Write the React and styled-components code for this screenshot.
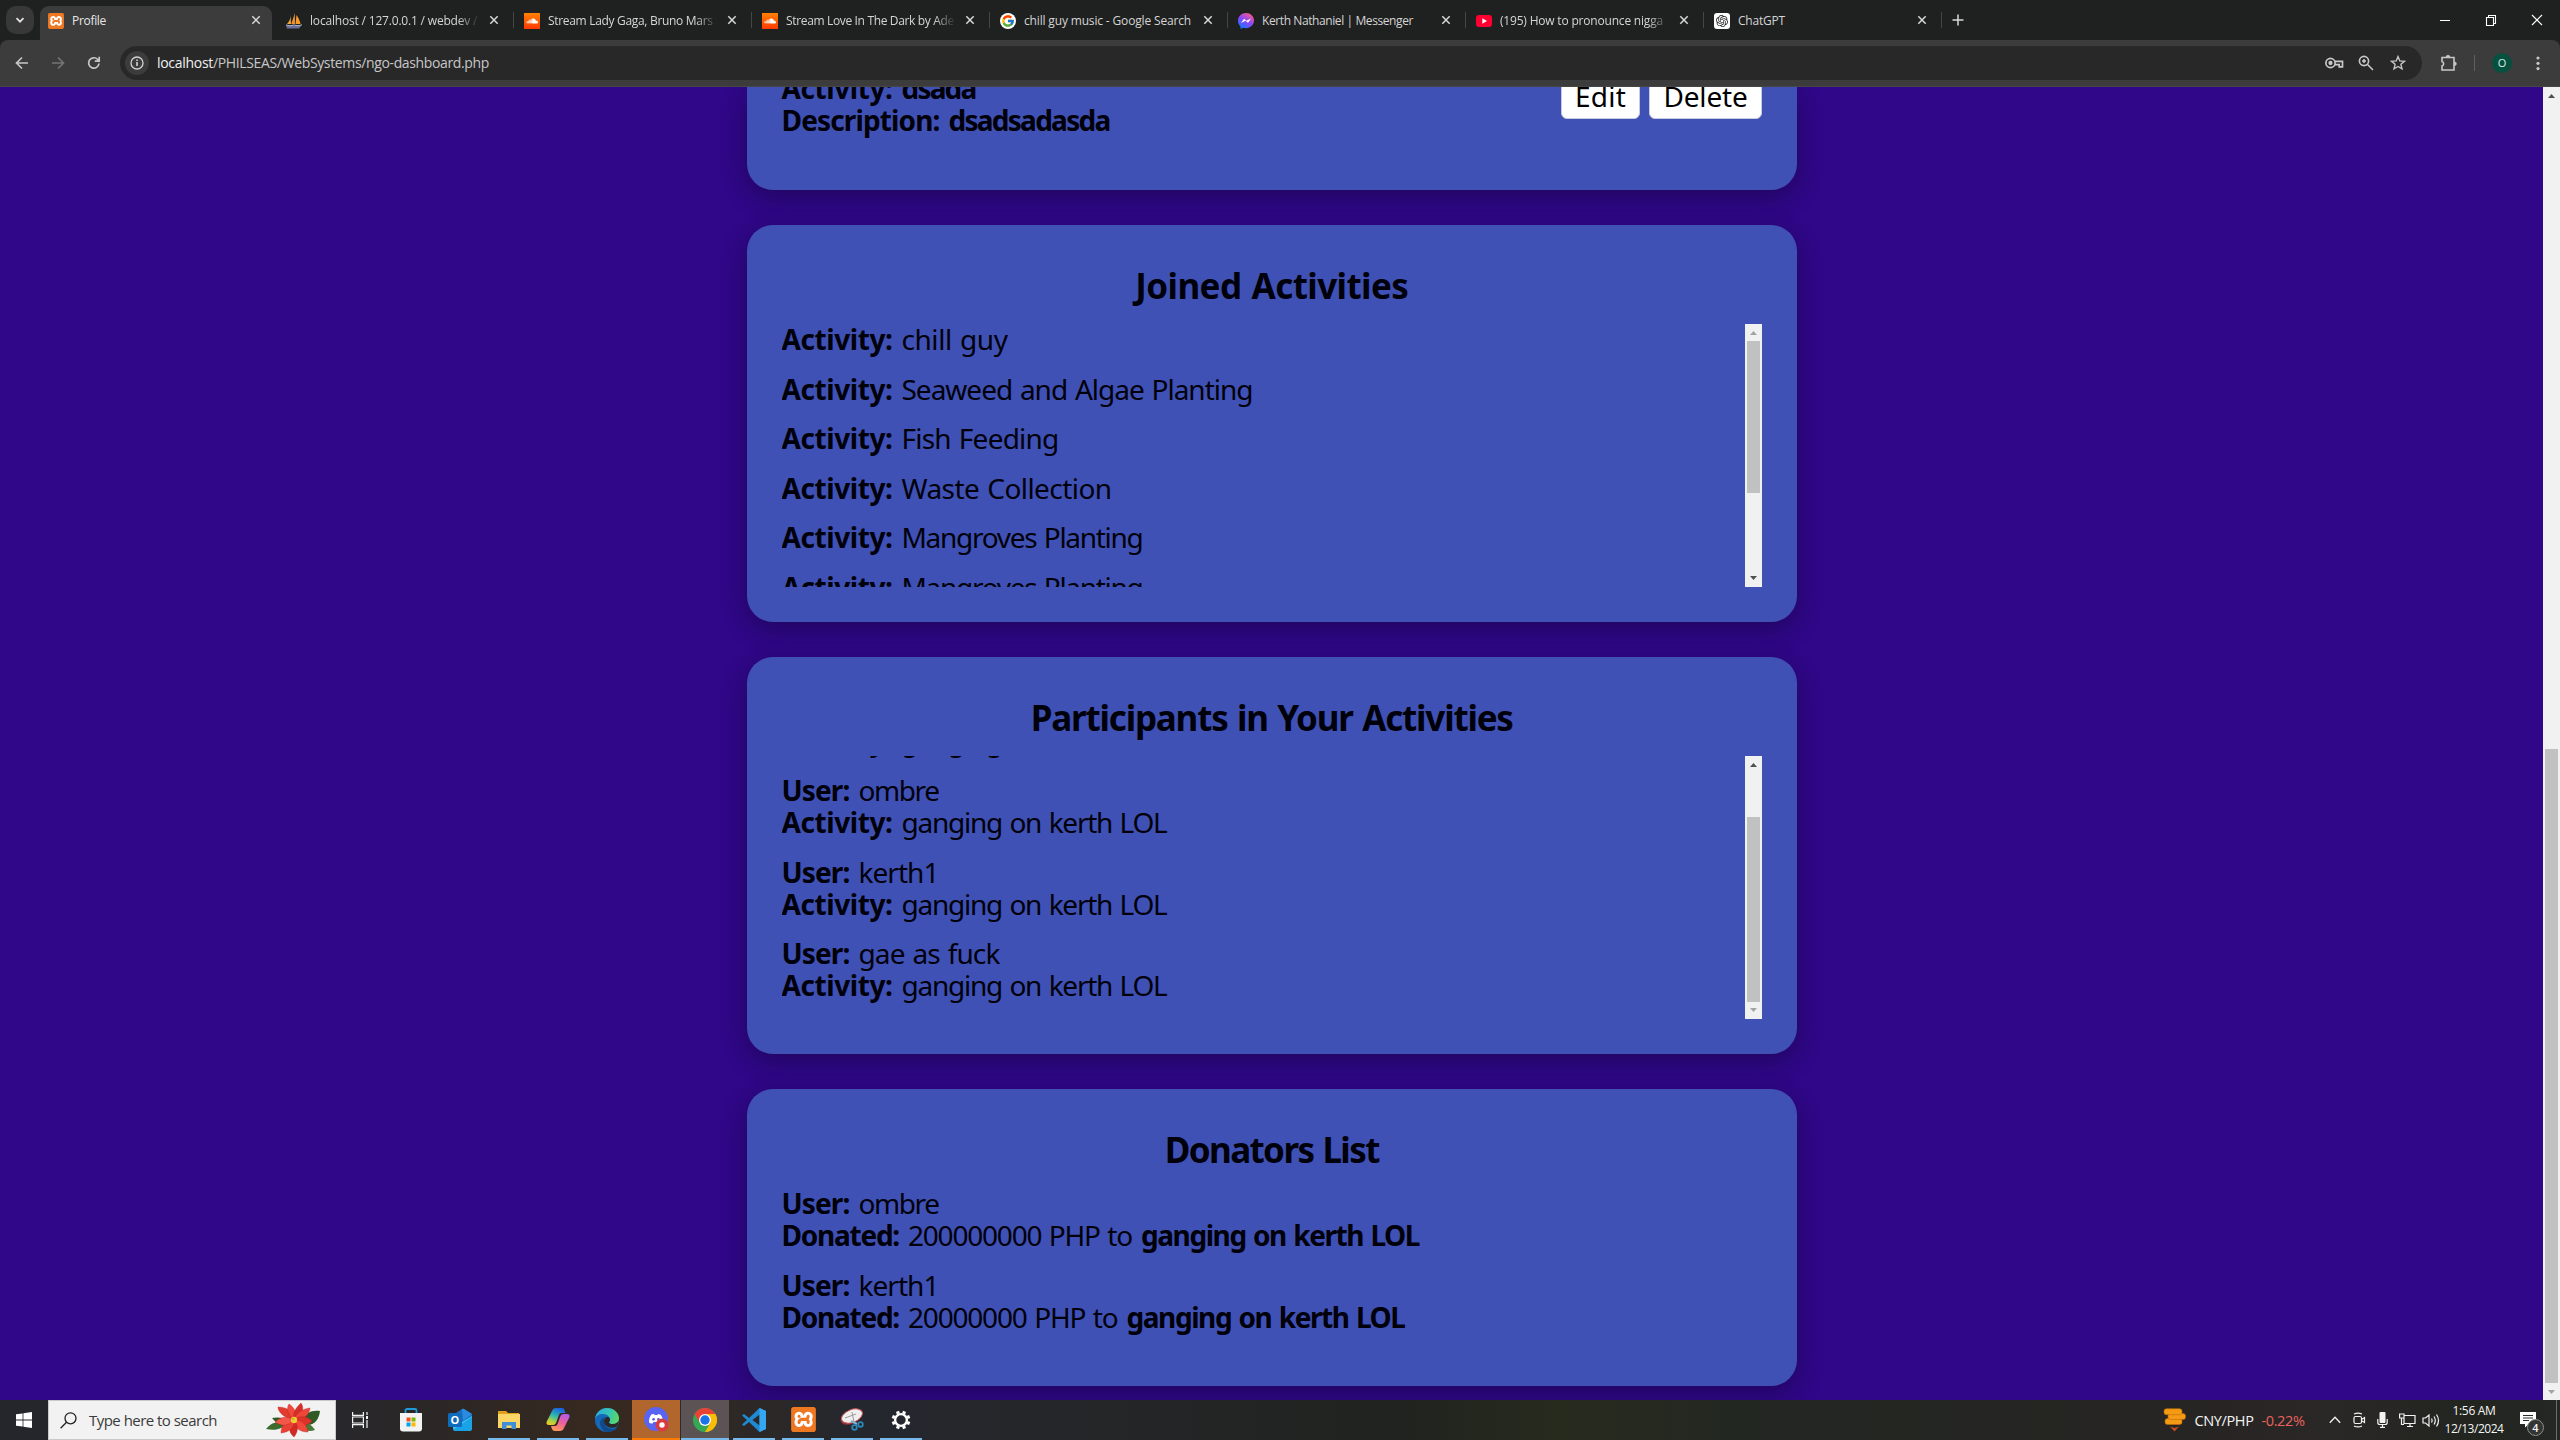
import React, { useLayoutEffect, useRef, useState } from 'react';
import styled, { createGlobalStyle, css } from 'styled-components';
import { FcGoogle } from 'react-icons/fc';
import { FaSoundcloud } from 'react-icons/fa';
import { SiXampp, SiOpenai } from 'react-icons/si';

const uiFont = "'Open Sans', 'Noto Sans', sans-serif";
const pageFont = "'Trebuchet MS', 'Noto Sans', 'Open Sans', sans-serif";

const Global = createGlobalStyle`
  * { box-sizing: border-box; }
  html, body { margin: 0; overflow: hidden; background: #2f0788; }
  svg { display: block; flex: none; }
`;

const Screen = styled.div`
  width: 2560px;
  height: 1440px;
  display: flex;
  flex-direction: column;
  overflow: hidden;
  font-family: ${uiFont};
`;

/* ---------- text run with tracking tuned to a measure ---------- */

const Run = styled.span`
  display: inline-block;
  white-space: pre;
`;

function Fit({ w, children, className }) {
  const ref = useRef(null);
  const [gap, setGap] = useState(0);
  useLayoutEffect(() => {
    const natural = ref.current.getBoundingClientRect().width;
    setGap((w - natural) / String(children).length);
  }, [w, children]);
  return (
    <Run ref={ref} className={className} style={{ letterSpacing: `${gap}px` }}>
      {children}
    </Run>
  );
}

/* ---------- tab strip ---------- */

const TabStrip = styled.div`
  height: 40px;
  flex: none;
  display: flex;
  align-items: flex-start;
  background: #1f2020;
`;

const TabSearch = styled.div`
  width: 28px;
  height: 28px;
  margin: 6px 0 0 6px;
  border-radius: 10px;
  background: #373837;
  display: flex;
  align-items: center;
  justify-content: center;
`;

const Tab = styled.div`
  position: relative;
  width: 238px;
  height: 34px;
  margin-top: 6px;
  padding: 0 8px 6px 3px;
  display: flex;
  align-items: center;
  color: #d5d5d5;
  font-size: 12px;
  &::before {
    content: '';
    position: relative;
    width: 1px;
    height: 16px;
    margin-right: 10px;
    background: ${(p) => (p.$sep ? '#454646' : 'transparent')};
  }
  ${(p) =>
    p.$active &&
    css`
      color: #e6e6e6;
      z-index: 0;
      &::after {
        content: '';
        position: absolute;
        z-index: -1;
        inset: 0 0 0 6px;
        border-radius: 9px 9px 0 0;
        background: #3c3c3c;
      }
    `}
`;

const TabIcon = styled.div`
  width: 16px;
  height: 16px;
  flex: none;
  margin-top: 1px;
  display: flex;
  align-items: center;
  justify-content: center;
  overflow: hidden;
  border-radius: ${(p) => p.$r || 0};
  background: ${(p) => p.$bg || 'transparent'};
`;

const TabTitle = styled.div`
  width: 168px;
  margin: 1px 8px 0 8px;
  line-height: 18px;
  overflow: hidden;
  white-space: nowrap;
  mask-image: ${(p) => (p.$fade ? 'linear-gradient(90deg, #000 148px, transparent 170px)' : 'none')};
`;

const StripEnd = styled.div`
  height: 40px;
  flex: 1;
  padding: 0 17px 0 3px;
  display: flex;
  align-items: center;
  &::before {
    content: '';
    width: 1px;
    height: 16px;
    margin-right: 10px;
    background: #454646;
  }
`;

const WindowButtons = styled.div`
  margin-left: auto;
  display: flex;
  align-items: center;
  gap: 34px;
`;

/* ---------- address bar ---------- */

const ToolbarBack = styled.div`
  height: 47px;
  flex: none;
  background: #1f2020;
`;

const Toolbar = styled.div`
  height: 47px;
  padding: 0 20px 1px 14px;
  display: flex;
  align-items: center;
  border-radius: 8px 8px 0 0;
  background: #3c3c3c;
  border-bottom: 1px solid #464646;
`;

const NavIcons = styled.div`
  display: flex;
  gap: 20px;
  width: 106px;
`;

const UrlPill = styled.div`
  flex: 1;
  height: 34px;
  padding: 0 16px 0 5px;
  border-radius: 17px;
  background: #282828;
  display: flex;
  align-items: center;
  font-size: 14px;
  color: #c7c7c7;
`;

const SiteInfo = styled.div`
  width: 24px;
  height: 24px;
  margin-right: 8px;
  border-radius: 50%;
  background: #3c3c3c;
  display: flex;
  align-items: center;
  justify-content: center;
`;

const HostText = styled(Fit)`
  color: #f0f0f0;
`;

const PillIcons = styled.div`
  margin-left: auto;
  display: flex;
  align-items: center;
  gap: 12px;
`;

const StarSlot = styled.div`
  margin-left: 2px;
`;

const ExtensionSlot = styled.div`
  margin-left: 18px;
`;

const ToolDivider = styled.div`
  width: 1px;
  height: 16px;
  margin: 0 17px 0 16px;
  background: #606060;
`;

const Avatar = styled.div`
  width: 20px;
  height: 20px;
  margin-right: 24px;
  border-radius: 50%;
  background: #05503f;
  color: #dcece8;
  font-size: 11px;
  line-height: 20px;
  text-align: center;
`;

/* ---------- page ---------- */

const Viewport = styled.div`
  height: 1313px;
  flex: none;
  display: flex;
  overflow: hidden;
  background: #2f0788;
`;

const Page = styled.main`
  flex: 1;
  display: flex;
  flex-direction: column;
  align-items: center;
  gap: 35px;
  font-family: ${pageFont};
  font-size: 28px;
  word-spacing: 1.5px;
  color: #00000a;
`;

const Card = styled.section`
  width: 1050px;
  flex: none;
  height: ${(p) => p.$h}px;
  padding: 0 35px 0 34.5px;
  border-radius: ${(p) => (p.$cut ? '0 0 26px 26px' : '26px')};
  background: #3f51b5;
  box-shadow: 0 8px 26px rgba(0, 0, 0, 0.3);
  margin-left: 1px;
`;

const CardTitle = styled.h2`
  height: 99px;
  margin: 0;
  padding-top: 39px;
  font-size: 35px;
  line-height: 44px;
  font-weight: 700;
  text-align: center;
`;

const CutCardBody = styled.div`
  height: 60px;
  display: flex;
  justify-content: space-between;
  align-items: flex-start;
`;

const CutText = styled.div`
  margin-top: -14px;
  font-weight: 700;
`;

const ButtonRow = styled.div`
  display: flex;
  gap: 9px;
`;

const ActionButton = styled.button`
  width: ${(p) => p.$w}px;
  height: 46px;
  margin-top: -14px;
  padding: 0 0 1px;
  border: 1px solid #c9cbe0;
  border-radius: 6px;
  background: #fff;
  color: #000;
  font: 28px/40px ${pageFont};
`;

const ScrollArea = styled.div`
  height: 262.5px;
  display: flex;
  justify-content: space-between;
  overflow: hidden;
`;

const List = styled.div`
  margin-top: ${(p) => p.$shift || 0}px;
`;

const Entry = styled.div`
  margin-bottom: ${(p) => p.$after ?? 17.5}px;
`;

const Line = styled.div`
  height: 32px;
  line-height: 31px;
  display: flex;
  gap: 9px;
  white-space: nowrap;
`;

const Strong = styled(Fit)`
  font-weight: 700;
`;

/* ---------- scrollbar ---------- */

const Track = styled.div`
  width: 17px;
  flex: none;
  height: ${(p) => p.$h}px;
  display: flex;
  flex-direction: column;
  align-items: center;
  background: #f1f1f1;
`;

const Arrow = styled.div`
  width: 17px;
  height: 17px;
  flex: none;
  display: flex;
  align-items: center;
  justify-content: center;
`;

const Thumb = styled.div`
  width: 13px;
  height: ${(p) => p.$h}px;
  margin-top: ${(p) => p.$top}px;
  margin-bottom: auto;
  background: #c1c1c1;
`;

function Scrollbar({ h, top, thumb, up, down }) {
  const tone = (on) => (on ? '#505050' : '#a3a3a3');
  return (
    <Track $h={h}>
      <Arrow>
        <svg width="7" height="4"><path d="M0 4 3.5 0 7 4z" fill={tone(up)} /></svg>
      </Arrow>
      <Thumb $h={thumb} $top={top} />
      <Arrow>
        <svg width="7" height="4"><path d="M0 0h7L3.5 4z" fill={tone(down)} /></svg>
      </Arrow>
    </Track>
  );
}

/* ---------- taskbar ---------- */

const Taskbar = styled.footer`
  height: 40px;
  flex: none;
  display: flex;
  align-items: stretch;
  background: linear-gradient(90deg, #25262b 0, #27272b 330px, #2e2724 480px, #37291f 600px, #2c2827 760px, #24272e 860px, #242628 1100px, #20231f 1400px, #262b1e 1560px, #232722 1750px, #272523 2200px, #2a2727 2330px, #22251f 2480px, #242725 2560px);
`;

const TaskCell = styled.div`
  width: 48px;
  height: 40px;
  margin-right: ${(p) => p.$gap ?? 1}px;
  padding-top: 1px;
  display: flex;
  align-items: center;
  justify-content: center;
  background: ${(p) => p.$bg || 'transparent'};
  border-bottom: 2px solid transparent;
  border-image: ${(p) =>
    p.$open
      ? p.$wide
        ? `linear-gradient(${p.$open}, ${p.$open}) 1`
        : `linear-gradient(90deg, transparent 4px, ${p.$open} 4px, ${p.$open} 44px, transparent 44px) 1`
      : 'none'};
  border-width: 0 0 2px;
`;

const SearchBox = styled.div`
  width: 288px;
  margin-right: 0;
  padding: 0 15px 0 11px;
  display: flex;
  align-items: center;
  gap: 12px;
  border: 1px solid #c9c9c9;
  background: #f2f2f2;
  color: #3a3a3a;
  font-size: 15px;
`;

const Push = styled.div`
  margin-left: auto;
`;

const Tray = styled.div`
  width: 397px;
  margin-left: auto;
  display: flex;
  align-items: center;
  color: #f4f4f4;
  font-size: 14.5px;
`;

const TrayItem = styled.div`
  width: ${(p) => p.$w}px;
  flex: none;
  margin-right: ${(p) => p.$gap}px;
  display: flex;
  justify-content: center;
  white-space: nowrap;
  color: ${(p) => p.$c || 'inherit'};
`;

const Clock = styled.div`
  width: 60px;
  margin-right: 16px;
  display: flex;
  flex-direction: column;
  align-items: center;
  font-size: 12px;
  line-height: 18px;
  white-space: nowrap;
`;

const Notice = styled.div`
  position: relative;
  width: 16px;
  height: 16px;
`;

const NoticeCount = styled.div`
  position: absolute;
  left: 7px;
  top: 7px;
  width: 17px;
  height: 17px;
  border: 1px solid #8d8f8c;
  border-radius: 50%;
  background: #333533;
  font-size: 11px;
  font-weight: 600;
  line-height: 15px;
  text-align: center;
`;

const PeekLine = styled.div`
  width: 1px;
  height: 40px;
  margin-left: 20px;
  background: #6c6e6c;
`;

/* ---------- icons ---------- */

const Stroke = ({ w = 16, h = w, vb = `0 0 ${w} ${h}`, c = '#c7c7c7', sw = 1.7, children }) => (
  <svg width={w} height={h} viewBox={vb} fill="none" stroke={c} strokeWidth={sw}>{children}</svg>
);

const CloseMark = () => (
  <Stroke w={16} c="#d8d8d8" sw={1.5}><path d="M4.3 4.3l7.4 7.4M11.7 4.3l-7.4 7.4" /></Stroke>
);

const XamppMark = ({ s }) => (
  <svg width={s} height={s} viewBox="0 0 24 24">
    <rect x="1" y="1" width="22" height="22" rx="3" fill="#fff" />
    <SiXampp size={24} color="#ee7722" />
  </svg>
);

const SailMark = () => (
  <svg width="18" height="16" viewBox="0 0 18 16">
    <path d="M5.5 0C6 4 5 8 2 11h4z" fill="#f5a33a" />
    <path d="M9.8 0c-1 4-2.800 8-3.500 11H10z" fill="#e89430" />
    <path d="M11.500 2c2 3 3.500 6 4 9h-5z" fill="#f79a28" />
    <path d="M1 12.500h15.500L14 15.500H2z" fill="#6b6d96" />
    <path d="M1 12l4 .8 4-.8 4 .8 4-1" stroke="#b5b7cc" fill="none" />
  </svg>
);

const CloudMark = () => <FaSoundcloud size={12} color="#fff" />;

const MessengerMark = () => (
  <svg width="16" height="16" viewBox="0 0 16 16">
    <defs>
      <linearGradient id="msg" x1=".2" y1="1" x2=".8" y2="0">
        <stop offset="0" stopColor="#0a7cff" /><stop offset=".5" stopColor="#8a46ff" /><stop offset="1" stopColor="#ff5c7c" />
      </linearGradient>
    </defs>
    <path d="M8 0C3.500 0 0 3.300 0 7.700c0 2.300 1 4.300 2.500 5.700V16l2.500-1.200c1 .3 2 .4 3 .4 4.500 0 8-3.300 8-7.600S12.500 0 8 0z" fill="url(#msg)" />
    <path d="M3 10l3-4.300 2.500 2L13 5.400 10 9.700l-2.500-2z" fill="#fff" />
  </svg>
);

const TubeMark = () => (
  <svg width="16" height="16" viewBox="0 0 16 16">
    <rect x="0" y="2" width="16" height="12" rx="3" fill="#ff0033" />
    <path d="M6.300 5.300v5.400L11 8z" fill="#fff" />
  </svg>
);

const StartMark = () => (
  <svg width="16" height="16" viewBox="0 0 16 16" fill="#fff">
    <path d="M0 2.300 6.600 1.400v6.200H0zM7.400 1.300 16 0v7.600H7.400zM0 8.400h6.600v6.200L0 13.700zM7.400 8.400H16V16l-8.600-1.300z" />
  </svg>
);

const Poinsettia = () => (
  <svg width="54" height="34" viewBox="0 0 54 34">
    <path d="M0 26C6 19 12 18 20 20c-3 6-10 8-20 6z" fill="#3c6b2c" />
    <path d="M6 15c5-1 11-1 15 3l-3 5C13 22 9 19 6 15z" fill="#2f5a26" />
    <path d="M54 8c-9-1-14 2-18 8l5 6c8 0 12-6 13-14z" fill="#2f5a26" />
    <path d="M49 27c-4-6-8-8-14-8l-1 6c5 3 10 4 15 2z" fill="#477a35" />
    {[
      ['M28 17C18 15 12 9 12 4c8 0 14 3 16 13z', '#e23b30'],
      ['M28 17C20 10 21 4 23 1c6 4 8 9 5 16z', '#f04a3c'],
      ['M28 17C26 9 31 4 35 0c4 6 1 12-7 17z', '#d62e28'],
      ['M28 17c2-8 9-11 16-12-1 8-7 12-16 12z', '#ee4639'],
      ['M28 17c6-5 13-4 18 1-6 7-13 5-18-1z', '#dc3229'],
      ['M28 17c9-1 13 6 14 12-8 0-14-4-14-12z', '#f0483b'],
      ['M28 17c5 6 4 12 0 17-6-5-6-12 0-17z', '#d12a25'],
      ['M28 17c1 8-5 12-13 13 0-8 5-13 13-13z', '#ea4136'],
      ['M28 17c-6 7-13 6-19 2 6-6 13-6 19-2z', '#f2574a'],
    ].map(([d, c]) => <path key={d} d={d} fill={c} stroke="#b91f1c" strokeWidth=".4" />)}
    <circle cx="28" cy="17" r="3.200" fill="#f6c832" />
    <circle cx="27" cy="16" r="1.200" fill="#a9bf3a" />
  </svg>
);

const TaskViewMark = () => (
  <Stroke w={16} c="#f2f2f2" sw={1.200}>
    <path d="M.6 0v3.400h10.800V0M.6 16v-3.400h10.800V16M.6 5h10.800v6H.6zM15 0v3M15 8v8" />
    <rect x="14" y="4" width="2" height="3" fill="#f2f2f2" stroke="none" />
  </Stroke>
);

const StoreMark = () => (
  <svg width="24" height="24" viewBox="0 0 24 24">
    <path d="M6.500 6V2.500Q6.500 1 8 1h8q1.500 0 1.500 1.500V6" fill="none" stroke="#1d9bd8" strokeWidth="1.800" />
    <path d="M1 5h22v15.500q0 3-3 3H4q-3 0-3-3z" fill="#f3f3f3" />
    <path d="M7.500 9.500h4v4h-4z" fill="#f25022" /><path d="M12.500 9.500h4v4h-4z" fill="#7fba00" />
    <path d="M7.500 14.500h4v4h-4z" fill="#00a4ef" /><path d="M12.500 14.500h4v4h-4z" fill="#ffb900" />
  </svg>
);

const OutlookO = styled.div`
  position: absolute;
  left: 0;
  top: 5px;
  width: 14px;
  height: 14px;
  border-radius: 1.500px;
  background: #0f6cbd;
  color: #fff;
  font-size: 11px;
  font-weight: 700;
  line-height: 13px;
  text-align: center;
`;

const OutlookBox = styled.div`
  position: relative;
  width: 24px;
  height: 24px;
`;

const OutlookMark = () => (
  <OutlookBox>
    <svg width="24" height="24" viewBox="0 0 24 24">
      <path d="M5 7 14 1q1-.6 2 0l8 5v5L12 16 5 12z" fill="#1a6fc4" />
      <path d="M14 1q1-.6 2 0l8 5-9 7z" fill="#2b8be0" />
      <path d="M24 8v12q0 3-3 3H8q-3 0-3-3v-5l9-1z" fill="#35c3f2" />
      <path d="M5 22 24 9v11q0 3-3 3H8q-2 0-3-1z" fill="#1aa2e6" />
    </svg>
    <OutlookO>O</OutlookO>
  </OutlookBox>
);

const FolderMark = () => (
  <svg width="24" height="20" viewBox="0 0 24 20">
    <path d="M1 1h8l2 2h11v5H1z" fill="#e0a21d" />
    <rect x="1" y="4" width="22" height="14" fill="#fbd667" />
    <path d="M5 19v-7h14v7h-4.500v-3.500h-5V19z" fill="#3f8fd6" />
  </svg>
);

const CopilotMark = () => (
  <svg width="24" height="23" viewBox="0 0 24 23">
    <defs>
      <linearGradient id="cpa" x1=".6" y1="0" x2=".2" y2="1">
        <stop offset="0" stopColor="#1c62e0" /><stop offset=".45" stopColor="#2fb8b0" /><stop offset=".8" stopColor="#b5d338" /><stop offset="1" stopColor="#f2c52c" />
      </linearGradient>
      <linearGradient id="cpb" x1=".7" y1="0" x2=".3" y2="1">
        <stop offset="0" stopColor="#b35be8" /><stop offset=".5" stopColor="#f0609a" /><stop offset="1" stopColor="#fa9a58" />
      </linearGradient>
    </defs>
    <path d="M6 3q1-3 4-3h6q2 0 2.500 2l1 3h-4q-2 0-2.600 2L10 15q-.8 2-3 2H3q-3 0-2.500-3z" fill="url(#cpa)" />
    <path d="M18 20q-1 3-4 3H9q-2.500 0-3-2l-1-3h4q2 0 2.600-2L14.500 8q.8-2 3-2H21q3 0 2.500 3z" fill="url(#cpb)" />
  </svg>
);

const EdgeMark = () => (
  <svg width="24" height="24" viewBox="0 0 24 24">
    <defs>
      <linearGradient id="eg" x1="0" y1=".3" x2="1" y2=".5">
        <stop offset="0" stopColor="#2ea6e0" /><stop offset=".6" stopColor="#36c8b0" /><stop offset="1" stopColor="#5fd860" />
      </linearGradient>
    </defs>
    <circle cx="12" cy="12" r="12" fill="#1568b8" />
    <path d="M0 11C1 4 6 0 12 0c7 0 12 5 12 10 0 4-3 6-6 6-2 0-4-.6-4-1.600 0-.7 1-1 1-3C15 9 12 6 8 6c-4 0-7 2-8 5z" fill="url(#eg)" />
    <path d="M9 13c0 5 4 8 9 8 2 0 3.500-.6 5-1.500C20.500 22.500 16 24 12 24 8 23 5 19 5 15c0-3 2-5 5-6-1 1-1 2.500-1 4z" fill="#114a8b" />
    <path d="M15 11.500c0 2-1 2.300-1 3 0 1 2 1.600 4 1.600 2.500 0 4.500-1.200 5.500-3 0 3-1 5-2.500 6-6 2-12-1-12-6 0-2 1.500-4 3.500-4 1.500 0 2.500 1 2.500 2.400z" fill="#2d2825" />
  </svg>
);

const DiscordMark = () => (
  <svg width="25" height="25" viewBox="0 0 25 25">
    <circle cx="12" cy="12" r="12" fill="#5865f2" />
    <path d="M5 15.500C5 11 6.500 8 8 7.300L10 7l.6 1h3L14 7l2.200.4C18 8.500 19 11.500 19 15c-1 1-2.500 1.600-3.500 1.600l-1-1.600h-5l-1 1.600C7.500 16.600 6 16.500 5 15.500z" fill="#fff" />
    <circle cx="9.600" cy="12.300" r="1.400" fill="#5865f2" /><circle cx="14.400" cy="12.300" r="1.400" fill="#5865f2" />
    <circle cx="18" cy="18" r="6.500" fill="#d83c3e" /><circle cx="18" cy="18" r="2.700" fill="#fff" />
  </svg>
);

const ChromeMark = () => (
  <svg width="24" height="24" viewBox="0 0 24 24">
    <circle cx="12" cy="12" r="12" fill="#34a853" />
    <path d="M12 6h10.400A12 12 0 0 1 12 24l5.200-9z" fill="#fbbc05" />
    <path d="M1.600 6A12 12 0 0 1 22.400 6H12l-5.200 9z" fill="#ea4335" />
    <circle cx="12" cy="12" r="6" fill="#fff" /><circle cx="12" cy="12" r="4.700" fill="#1a73e8" />
  </svg>
);

const CodeMark = () => (
  <svg width="24" height="24" viewBox="0 0 24 24">
    <path d="M17.500 0 24 3v18l-6.500 3L7 14l-5 4-2-1.600L5 12 0 7.600 2 6l5 4zM17.500 6.500 10.500 12l7 5.500z" fill="#1f8ad2" fillRule="evenodd" />
    <path d="M17.500 0 24 3v18l-6.500 3z" fill="#35a7f0" />
  </svg>
);

const SnipMark = () => (
  <svg width="24" height="24" viewBox="0 0 24 24">
    <ellipse cx="11" cy="9.500" rx="11" ry="6.500" transform="rotate(-22 11 9.500)" fill="#8c2f36" />
    <ellipse cx="12" cy="8" rx="11" ry="6.300" transform="rotate(-22 12 8)" fill="#f0eeee" stroke="#c9545a" />
    <path d="M5 10l11-4M12 4l2 10" stroke="#9a9a9a" fill="none" />
    <path d="M11 13l6 3" stroke="#7fb2cf" strokeWidth="2" />
    <circle cx="14.500" cy="19.500" r="2.300" fill="none" stroke="#2d86b8" strokeWidth="1.800" />
    <circle cx="20.500" cy="16.500" r="2.300" fill="none" stroke="#2d86b8" strokeWidth="1.800" />
  </svg>
);

const GearMark = () => (
  <svg width="20" height="20" viewBox="0 0 20 20" fill="none" stroke="#fff">
    <circle cx="10" cy="10" r="5.900" strokeWidth="2.400" />
    <g strokeWidth="3.200">
      {[0, 45, 90, 135, 180, 225, 270, 315].map((a) => (
        <path key={a} d="M10 .6v2.800" transform={`rotate(${a + 22.5} 10 10)`} />
      ))}
    </g>
  </svg>
);

const CoinsMark = () => (
  <svg width="24" height="24" viewBox="0 0 24 24">
    <g fill="#f49a14" stroke="#c06c08" strokeWidth=".6">
      <rect x="2" y="10.500" width="17" height="6" rx="2.500" />
      <rect x="5" y="5.500" width="17.500" height="6" rx="2.500" />
      <rect x="1" y=".7" width="18" height="6" rx="2.500" />
    </g>
    <path d="M7 18.500l4.500 1.500 4.500-1.500L11.500 23.500z" fill="#c94a22" />
  </svg>
);

/* ---------- data ---------- */

const tabs = [
  { t: 'Profile', w: 34, icon: <XamppMark s={16} />, active: true },
  { t: 'localhost / 127.0.0.1 / webdev / activ', w: 195, icon: <SailMark />, fade: true },
  { t: 'Stream Lady Gaga, Bruno Mars -', w: 171, icon: <CloudMark />, bg: 'linear-gradient(#ff8000,#ff3a00)', sep: true, fade: true },
  { t: 'Stream Love In The Dark by Adele', w: 177, icon: <CloudMark />, bg: 'linear-gradient(#ff8000,#ff3a00)', sep: true, fade: true },
  { t: 'chill guy music - Google Search', w: 167, icon: <FcGoogle size={14} />, bg: '#fff', r: '50%', sep: true },
  { t: 'Kerth Nathaniel | Messenger', w: 151, icon: <MessengerMark />, sep: true },
  { t: '(195) How to pronounce nigga', w: 163, icon: <TubeMark />, sep: true, fade: true },
  { t: 'ChatGPT', w: 47, icon: <SiOpenai size={12} color="#222" />, bg: '#fff', r: '3px', sep: true },
];

const joined = [
  ['chill guy', 106],
  ['Seaweed and Algae Planting', 351],
  ['Fish Feeding', 157],
  ['Waste Collection', 210],
  ['Mangroves Planting', 241],
  ['Mangroves Planting', 241],
];

const participants = [
  ['ombre', 80],
  ['kerth1', 80],
  ['gae as fuck', 141],
];

const donors = [
  { user: 'ombre', amount: '200000000 PHP to', w: 224 },
  { user: 'kerth1', amount: '20000000 PHP to', w: 209.5 },
];

const apps = [
  { icon: <FolderMark />, open: '#76b9ed' },
  { icon: <CopilotMark />, open: '#76b9ed' },
  { icon: <EdgeMark />, open: '#76b9ed' },
  { icon: <DiscordMark />, open: '#ff7a00', bg: '#b0662d', wide: true },
  { icon: <ChromeMark />, open: '#76b9ed', bg: '#5c5355', wide: true },
  { icon: <CodeMark />, open: '#76b9ed' },
  { icon: <XamppMark s={25} />, open: '#76b9ed' },
  { icon: <SnipMark />, open: '#76b9ed' },
  { icon: <GearMark />, open: '#76b9ed' },
];

const ActivityLine = ({ text, w }) => (
  <Line><Strong w={111}>Activity:</Strong><Fit w={w}>{text}</Fit></Line>
);

const UserLine = ({ text, w = 80 }) => (
  <Line><Strong w={68}>User:</Strong><Fit w={w}>{text}</Fit></Line>
);

/* ---------- app ---------- */

export default function App() {
  return (
    <Screen>
      <Global />
      <TabStrip>
        <TabSearch>
          <Stroke w={10} c="#e0e0e0" sw={1.8}><path d="M1.500 3.200 5 6.700l3.500-3.500" /></Stroke>
        </TabSearch>
        {tabs.map((tab) => (
          <Tab key={tab.t} $active={tab.active} $sep={tab.sep}>
            <TabIcon $bg={tab.bg} $r={tab.r}>{tab.icon}</TabIcon>
            <TabTitle $fade={tab.fade}><Fit w={tab.w}>{tab.t}</Fit></TabTitle>
            <CloseMark />
          </Tab>
        ))}
        <StripEnd>
          <Stroke w={12} c="#d8d8d8" sw={1.500}><path d="M6 .5v11M.5 6h11" /></Stroke>
          <WindowButtons>
            <Stroke w={12} c="#fff" sw={1}><path d="M1 6.500h10" /></Stroke>
            <Stroke w={12} c="#fff" sw={1.100}><path d="M1.500 3.500h7v8h-7zM3.500 3.500v-2h7v8h-2" /></Stroke>
            <Stroke w={12} c="#fff" sw={1.100}><path d="M1 1l10 10M11 1 1 11" /></Stroke>
          </WindowButtons>
        </StripEnd>
      </TabStrip>

      <ToolbarBack>
        <Toolbar>
          <NavIcons>
            <Stroke><path d="M14 8H3M8 2.500 2.500 8 8 13.500" /></Stroke>
            <Stroke c="#747474"><path d="M2 8h11M8 2.500 13.500 8 8 13.500" /></Stroke>
            <Stroke><path d="M13 8.500A5.200 5.200 0 1 1 11.700 4.500L13 6M13.200 1.800v4.400H8.800" /></Stroke>
          </NavIcons>
          <UrlPill>
            <SiteInfo>
              <Stroke w={14} c="#d2d2d2" sw={1.300}><circle cx="7" cy="7" r="6" /><path d="M7 6v4M7 3.600v1.500" strokeWidth="1.600" /></Stroke>
            </SiteInfo>
            <HostText w={56}>localhost</HostText>
            <Fit w={276}>/PHILSEAS/WebSystems/ngo-dashboard.php</Fit>
            <PillIcons>
              <Stroke w={20} h={16} sw={1.700}>
                <circle cx="6.500" cy="8" r="4.600" /><circle cx="6.500" cy="8" r="1.300" fill="#c7c7c7" />
                <path d="M11 6.300h7.500v5.500h-3.300V9.700H11" />
              </Stroke>
              <Stroke w={20} h={16} sw={1.600}>
                <circle cx="8" cy="6" r="4.600" /><path d="M11.300 9.300 17 15M8 4v4M6 6h4" />
              </Stroke>
              <StarSlot>
                <Stroke w={16} sw={1.400}><path d="m8 1.600 1.800 4.300 4.700.4-3.600 3 1.100 4.600L8 11.500 4 13.900l1.100-4.600-3.600-3 4.700-.4z" /></Stroke>
              </StarSlot>
            </PillIcons>
          </UrlPill>
          <ExtensionSlot>
            <Stroke w={18} sw={1.600}>
              <path d="M2 3.500h12V16H2v-4a2.300 2.300 0 0 0 0-4.400z" />
              <path d="M6.200 3a1.800 1.800 0 0 1 3.600 0zM14.500 8a1.800 1.800 0 0 1 0 3.600z" fill="#c7c7c7" strokeWidth=".8" />
            </Stroke>
          </ExtensionSlot>
          <ToolDivider />
          <Avatar>O</Avatar>
          <svg width="4" height="16" fill="#c7c7c7"><circle cx="2" cy="3" r="1.600" /><circle cx="2" cy="8.300" r="1.600" /><circle cx="2" cy="13.600" r="1.600" /></svg>
        </Toolbar>
      </ToolbarBack>

      <Viewport>
        <Page>
          <Card $h={103} $cut>
            <CutCardBody>
              <CutText>
                <Line><Fit w={111}>Activity:</Fit><Fit w={74}>dsada</Fit></Line>
                <Line><Fit w={158}>Description:</Fit><Fit w={161}>dsadsadasda</Fit></Line>
              </CutText>
              <ButtonRow>
                <ActionButton $w={79}><Fit w={51}>Edit</Fit></ActionButton>
                <ActionButton $w={113}><Fit w={84}>Delete</Fit></ActionButton>
              </ButtonRow>
            </CutCardBody>
          </Card>

          <Card $h={397}>
            <CardTitle><Fit w={273}>Joined Activities</Fit></CardTitle>
            <ScrollArea>
              <List>
                {joined.map(([t, w], i) => <Entry key={i}><ActivityLine text={t} w={w} /></Entry>)}
              </List>
              <Scrollbar h={262.5} top={0} thumb={152} down />
            </ScrollArea>
          </Card>

          <Card $h={397}>
            <CardTitle><Fit w={482}>Participants in Your Activities</Fit></CardTitle>
            <ScrollArea>
              <List $shift={-31.5}>
                <Entry $after={18.5}><ActivityLine text="ganging on kerth LOL" w={265} /></Entry>
                {participants.map(([t, w]) => (
                  <Entry key={t}>
                    <UserLine text={t} w={w} />
                    <ActivityLine text="ganging on kerth LOL" w={265} />
                  </Entry>
                ))}
              </List>
              <Scrollbar h={262.5} top={44} thumb={185} up />
            </ScrollArea>
          </Card>

          <Card $h={297}>
            <CardTitle><Fit w={214}>Donators List</Fit></CardTitle>
            {donors.map((d) => (
              <Entry key={d.user}>
                <UserLine text={d.user} />
                <Line>
                  <Strong w={117.5}>Donated:</Strong>
                  <Fit w={d.w}>{d.amount}</Fit>
                  <Strong w={278}>ganging on kerth LOL</Strong>
                </Line>
              </Entry>
            ))}
          </Card>
        </Page>
        <Scrollbar h={1313} top={645} thumb={634} up />
      </Viewport>

      <Taskbar>
        <TaskCell $gap={0}><StartMark /></TaskCell>
        <SearchBox>
          <Stroke w={17} c="#222" sw={1.300}><circle cx="10.500" cy="6.300" r="5.500" /><path d="M6.500 10.200.6 16.200" /></Stroke>
          <Fit w={128}>Type here to search</Fit>
          <Push><Poinsettia /></Push>
        </SearchBox>
        <TaskCell $gap={3}><TaskViewMark /></TaskCell>
        <TaskCell><StoreMark /></TaskCell>
        <TaskCell><OutlookMark /></TaskCell>
        {apps.map((a, i) => (
          <TaskCell key={i} $open={a.open} $bg={a.bg} $wide={a.wide}>{a.icon}</TaskCell>
        ))}
        <Tray>
          <TrayItem $w={24} $gap={8}><CoinsMark /></TrayItem>
          <TrayItem $w={58} $gap={9}><Fit w={59}>CNY/PHP</Fit></TrayItem>
          <TrayItem $w={42} $gap={25} $c="#e8625e"><Fit w={43}>-0.22%</Fit></TrayItem>
          <TrayItem $w={12} $gap={12}><Stroke w={12} h={8} c="#f2f2f2" sw={1.300}><path d="M.8 6.800 6 1.300l5.200 5.500" /></Stroke></TrayItem>
          <TrayItem $w={13} $gap={11}>
            <Stroke w={13} h={16} c="#f2f2f2" sw={1.200}><rect x="1" y="4.500" width="7.500" height="7" rx="1.500" /><path d="M8.500 7.500 11.500 5.500v5L8.500 8.700M1 2Q5 .2 9 2M1 14q4 1.800 8 0" /></Stroke>
          </TrayItem>
          <TrayItem $w={11} $gap={11}>
            <Stroke w={11} h={16} c="#f2f2f2" sw={1.200}><rect x="2.500" y="0" width="6" height="11" rx="1" fill="#f2f2f2" stroke="none" /><path d="M.8 7v3.500q0 2 2 2h5.400q2 0 2-2V7M5.500 12.500v3M3 15.400h5" /></Stroke>
          </TrayItem>
          <TrayItem $w={17} $gap={6}>
            <Stroke w={17} h={15} c="#f2f2f2" sw={1.200}><path d="M5 2.500h11v8H5zM8 13.500h6M11 10.500v3M.6 1h4.400v4H.6zM2.500 5v6.500H5" /></Stroke>
          </TrayItem>
          <TrayItem $w={18} $gap={4}>
            <Stroke w={18} h={15} c="#f2f2f2" sw={1.200}><path d="M1 5h2.500L7 2v11l-3.500-3H1zM9.500 5.500q1.200 2 0 4M12 3.500q2.600 4 0 8M14.500 1.500q4 6 0 12" /></Stroke>
          </TrayItem>
          <Clock><Fit w={43}>1:56 AM</Fit><Fit w={59}>12/13/2024</Fit></Clock>
          <Notice>
            <svg width="16" height="16" viewBox="0 0 16 16"><path d="M0 0h16v12h-7l-4 3.500V12H0z" fill="#fff" /><path d="M3 3.500h10M3 6h10M3 8.500h6" stroke="#2a2c2a" /></svg>
            <NoticeCount>4</NoticeCount>
          </Notice>
          <PeekLine />
        </Tray>
      </Taskbar>
    </Screen>
  );
}
